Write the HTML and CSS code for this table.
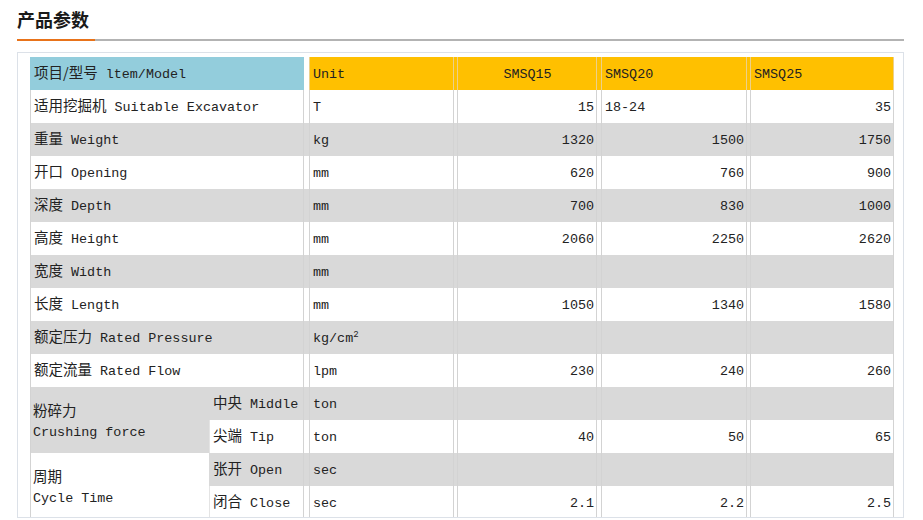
FILE: index.html
```html
<!DOCTYPE html>
<html lang="zh-CN">
<head>
<meta charset="utf-8">
<title>产品参数</title>
<link rel="stylesheet" href="styles.css">
</head>
<body>
<div class="page">
  <h2 class="title">产品参数</h2>
  <div class="rule"><span class="rule-accent"></span><span class="rule-line"></span></div>

  <div class="box">
    <div class="row head">
      <div class="c item cyan"><span class="zh">项目/型号</span> ltem/Model</div>
      <div class="c unit">Unit</div>
      <div class="c v1 center">SMSQ15</div>
      <div class="c v2 left">SMSQ20</div>
      <div class="c v3 left">SMSQ25</div>
    </div>

    <div class="row w">
      <div class="c item"><span class="zh">适用挖掘机</span> Suitable Excavator</div>
      <div class="c unit">T</div>
      <div class="c v1">15</div>
      <div class="c v2 left">18-24</div>
      <div class="c v3">35</div>
    </div>
    <div class="row g">
      <div class="c item"><span class="zh">重量</span> Weight</div>
      <div class="c unit">kg</div>
      <div class="c v1">1320</div>
      <div class="c v2">1500</div>
      <div class="c v3">1750</div>
    </div>
    <div class="row w">
      <div class="c item"><span class="zh">开口</span> Opening</div>
      <div class="c unit">mm</div>
      <div class="c v1">620</div>
      <div class="c v2">760</div>
      <div class="c v3">900</div>
    </div>
    <div class="row g">
      <div class="c item"><span class="zh">深度</span> Depth</div>
      <div class="c unit">mm</div>
      <div class="c v1">700</div>
      <div class="c v2">830</div>
      <div class="c v3">1000</div>
    </div>
    <div class="row w">
      <div class="c item"><span class="zh">高度</span> Height</div>
      <div class="c unit">mm</div>
      <div class="c v1">2060</div>
      <div class="c v2">2250</div>
      <div class="c v3">2620</div>
    </div>
    <div class="row g">
      <div class="c item"><span class="zh">宽度</span> Width</div>
      <div class="c unit">mm</div>
      <div class="c v1"></div>
      <div class="c v2"></div>
      <div class="c v3"></div>
    </div>
    <div class="row w">
      <div class="c item"><span class="zh">长度</span> Length</div>
      <div class="c unit">mm</div>
      <div class="c v1">1050</div>
      <div class="c v2">1340</div>
      <div class="c v3">1580</div>
    </div>
    <div class="row g">
      <div class="c item"><span class="zh">额定压力</span> Rated Pressure</div>
      <div class="c unit">kg/cm<sup>2</sup></div>
      <div class="c v1"></div>
      <div class="c v2"></div>
      <div class="c v3"></div>
    </div>
    <div class="row w">
      <div class="c item"><span class="zh">额定流量</span> Rated Flow</div>
      <div class="c unit">lpm</div>
      <div class="c v1">230</div>
      <div class="c v2">240</div>
      <div class="c v3">260</div>
    </div>

    <div class="group">
      <div class="label g"><div class="label-text"><span class="zh">粉碎力</span><br>Crushing force</div></div>
      <div class="subs">
        <div class="row sub g">
          <div class="c subitem"><span class="zh">中央</span> Middle</div>
          <div class="c unit">ton</div>
          <div class="c v1"></div>
          <div class="c v2"></div>
          <div class="c v3"></div>
        </div>
        <div class="row sub w">
          <div class="c subitem"><span class="zh">尖端</span> Tip</div>
          <div class="c unit">ton</div>
          <div class="c v1">40</div>
          <div class="c v2">50</div>
          <div class="c v3">65</div>
        </div>
      </div>
    </div>

    <div class="group">
      <div class="label w"><div class="label-text"><span class="zh">周期</span><br>Cycle Time</div></div>
      <div class="subs">
        <div class="row sub g">
          <div class="c subitem"><span class="zh">张开</span> Open</div>
          <div class="c unit">sec</div>
          <div class="c v1"></div>
          <div class="c v2"></div>
          <div class="c v3"></div>
        </div>
        <div class="row sub w">
          <div class="c subitem"><span class="zh">闭合</span> Close</div>
          <div class="c unit">sec</div>
          <div class="c v1">2.1</div>
          <div class="c v2">2.2</div>
          <div class="c v3">2.5</div>
        </div>
      </div>
    </div>
  </div>
</div>
</body>
</html>
```

FILE: styles.css
```css
html, body {
  margin: 0;
  padding: 0;
  background: #fff;
}

.page {
  width: 887px;
  padding-left: 17px;
  font-family: "Liberation Mono", "Noto Sans CJK SC", monospace;
  color: #222;
}

.title {
  margin: 0;
  padding-top: 7px;
  font-family: "Noto Sans CJK SC", sans-serif;
  font-size: 18px;
  line-height: 24px;
  font-weight: 700;
  color: #1a1a1a;
}

.rule {
  display: flex;
  height: 2px;
  margin-top: 8px;
}

.rule-accent {
  width: 78px;
  background: #e8731a;
}

.rule-line {
  flex: 1;
  background: #b3b3b3;
}

.box {
  box-sizing: border-box;
  margin-top: 11px;
  height: 466px;
  overflow: hidden;
  border: 1px solid #dce1e8;
  padding: 4px 0 0 12px;
  font-size: 13.4px;
}

.zh {
  font-family: "Noto Sans CJK SC", sans-serif;
  font-size: 14.5px;
  line-height: 16px;
}

.row {
  display: flex;
  height: 33px;
  width: 864px;
}

.row.sub {
  width: 685px;
}

.w { background: #fff; }
.g { background: #d9d9d9; }

.c {
  box-sizing: border-box;
  flex: none;
  padding: 2px 2px 0 3px;
  border-left: 1px solid #d3d3d3;
  border-right: 1px solid #d3d3d3;
  white-space: nowrap;
  line-height: 31px;
  text-align: right;
}

.item {
  width: 274px;
  margin-right: 5px;
  text-align: left;
}

.unit {
  width: 145px;
  margin-right: 3px;
  text-align: left;
}

.v1 {
  width: 140px;
  margin-right: 4px;
}

.v2 {
  width: 146px;
  margin-right: 3px;
}

.v3 {
  width: 144px;
}

.left { text-align: left; }
.center { text-align: center; }

.head {
  background: #ffc000;
}

.head .c {
  border-color: #ecd08a;
}

.head .cyan {
  background: #93cddc;
  border-color: #93cddc;
  box-shadow: 5px 0 0 #fff;
}

.group {
  display: flex;
  width: 864px;
}

.label {
  box-sizing: border-box;
  flex: none;
  width: 179px;
  display: flex;
  align-items: center;
  padding: 4px 0 0 2px;
  border-left: 1px solid #d3d3d3;
}

.label-text {
  line-height: 20px;
  white-space: nowrap;
}

.subitem {
  width: 95px;
  margin-right: 5px;
  text-align: left;
  border-left-color: #e4e4e4;
}

.g .subitem {
  border-left-color: #d9d9d9;
}

sup {
  font-size: 9px;
  line-height: 0;
  vertical-align: 5px;
}
```
